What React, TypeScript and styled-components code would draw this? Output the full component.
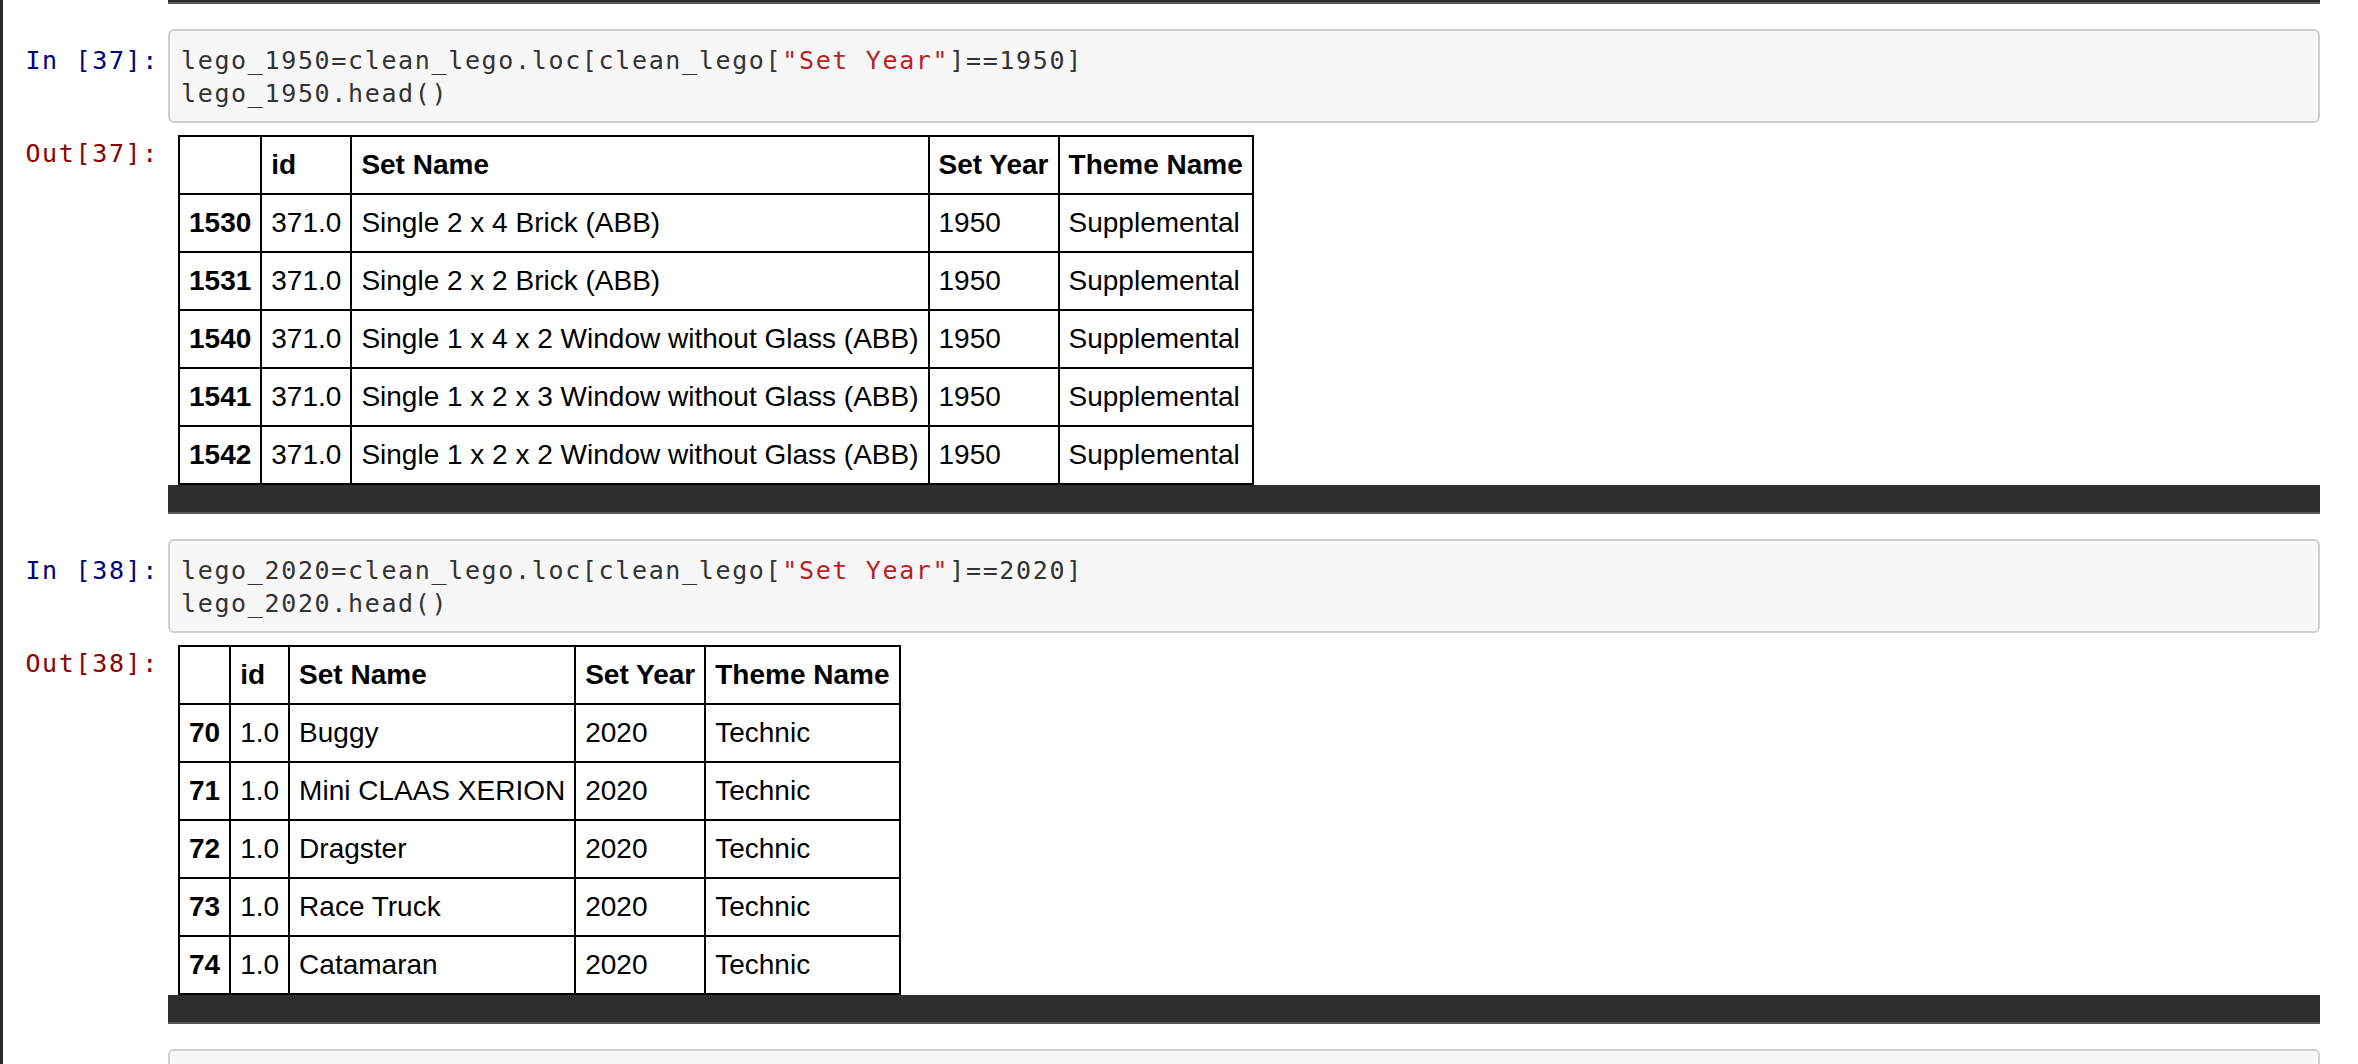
import { ReactElement, ReactNode } from "react";
import styled, { createGlobalStyle } from "styled-components";

const GlobalStyle = createGlobalStyle`
  html, body {
    margin: 0;
    padding: 0;
    background: #ffffff;
    overflow: hidden;
  }
`;

const Page = styled.div`
  min-height: 100vh;
  box-sizing: border-box;
  border-left: 3px solid #2b2b2b;
  padding-right: 38px;
  display: flex;
  flex-direction: column;
  gap: 25px;
  font-family: "Liberation Sans", Arial, sans-serif;
`;

const Row = styled.div`
  display: grid;
  grid-template-columns: 165px 1fr;
`;

const Prompt = styled.div<{ $out?: boolean }>`
  font-family: "DejaVu Sans Mono", monospace;
  font-size: 25px;
  letter-spacing: 1.65px;
  line-height: 33px;
  text-align: right;
  white-space: pre;
  padding-right: 9px;
  padding-top: ${(p) => (p.$out ? "14px" : "15px")};
  color: ${(p) => (p.$out ? "#8b0000" : "#000080")};
`;

const CodeBox = styled.pre`
  margin: 0;
  box-sizing: border-box;
  min-height: 94px;
  padding: 13px 11px 11px;
  background: #f7f7f7;
  border: 2px solid #cfcfcf;
  border-radius: 6px;
  font-family: "DejaVu Sans Mono", monospace;
  font-size: 25px;
  letter-spacing: 1.65px;
  line-height: 33px;
  color: #333333;
`;

const Str = styled.span`
  color: #ba2121;
`;

const OutputArea = styled.div`
  display: flex;
  flex-direction: column;
  align-items: flex-start;
  padding-top: 12px;
`;

const TableWrap = styled.div`
  padding-left: 10px;
`;

const ScrollBar = styled.div<{ $thin?: boolean }>`
  align-self: stretch;
  height: ${(p) => (p.$thin ? "2px" : "27px")};
  background: #2e2e2e;
  border-bottom: 2px solid #5a5a5a;
`;

const DataTable = styled.table`
  border-collapse: collapse;
  font-size: 28px;
  line-height: 32px;
  color: #000000;
  th,
  td {
    border: 2px solid #000000;
    padding: 12px 9px;
    text-align: left;
    white-space: nowrap;
  }
  th {
    font-weight: bold;
  }
`;

type Lego = [string, string, string, string, string];

const lego1950: Lego[] = [
  ["1530", "371.0", "Single 2 x 4 Brick (ABB)", "1950", "Supplemental"],
  ["1531", "371.0", "Single 2 x 2 Brick (ABB)", "1950", "Supplemental"],
  ["1540", "371.0", "Single 1 x 4 x 2 Window without Glass (ABB)", "1950", "Supplemental"],
  ["1541", "371.0", "Single 1 x 2 x 3 Window without Glass (ABB)", "1950", "Supplemental"],
  ["1542", "371.0", "Single 1 x 2 x 2 Window without Glass (ABB)", "1950", "Supplemental"],
];

const lego2020: Lego[] = [
  ["70", "1.0", "Buggy", "2020", "Technic"],
  ["71", "1.0", "Mini CLAAS XERION", "2020", "Technic"],
  ["72", "1.0", "Dragster", "2020", "Technic"],
  ["73", "1.0", "Race Truck", "2020", "Technic"],
  ["74", "1.0", "Catamaran", "2020", "Technic"],
];

function Frame({ rows }: { rows: Lego[] }) {
  return (
    <DataTable>
      <thead>
        <tr>
          <th></th>
          <th>id</th>
          <th>Set Name</th>
          <th>Set Year</th>
          <th>Theme Name</th>
        </tr>
      </thead>
      <tbody>
        {rows.map(([idx, id, name, year, theme]) => (
          <tr key={idx}>
            <th>{idx}</th>
            <td>{id}</td>
            <td>{name}</td>
            <td>{year}</td>
            <td>{theme}</td>
          </tr>
        ))}
      </tbody>
    </DataTable>
  );
}

function HeadCell({ n, year, rows }: { n: number; year: string; rows: Lego[] }) {
  const v = `lego_${year}`;
  return (
    <div>
      <Row>
        <Prompt>{`In [${n}]:`}</Prompt>
        <CodeBox>
          {`${v}=clean_lego.loc[clean_lego[`}
          <Str>"Set Year"</Str>
          {`]==${year}]\n${v}.head()`}
        </CodeBox>
      </Row>
      <Row>
        <Prompt $out>{`Out[${n}]:`}</Prompt>
        <OutputArea>
          <TableWrap>
            <Frame rows={rows} />
          </TableWrap>
          <ScrollBar />
        </OutputArea>
      </Row>
    </div>
  );
}

function EmptyCell({ children }: { children?: ReactNode }) {
  return (
    <Row>
      <Prompt>{"In [ ]:"}</Prompt>
      <CodeBox>{children}</CodeBox>
    </Row>
  );
}

export default function App(): ReactElement {
  return (
    <>
      <GlobalStyle />
      <Page>
        <Row>
          <div />
          <ScrollBar $thin />
        </Row>
        <HeadCell n={37} year="1950" rows={lego1950} />
        <HeadCell n={38} year="2020" rows={lego2020} />
        <EmptyCell />
      </Page>
    </>
  );
}
